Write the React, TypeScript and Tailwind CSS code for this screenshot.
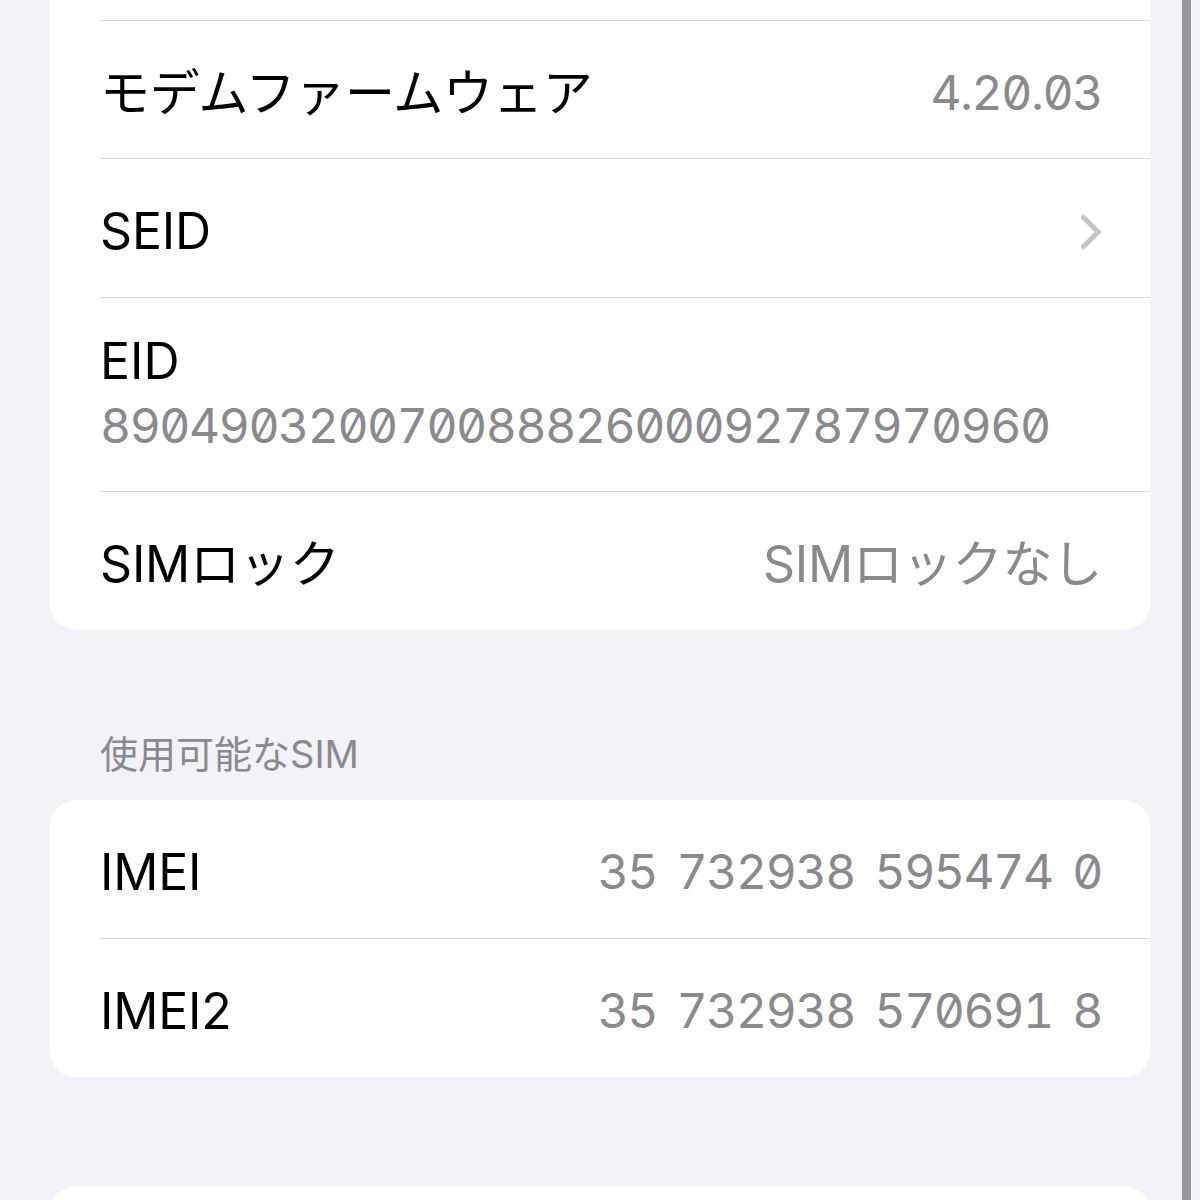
import React from "react";

// iOS "About" settings list, zoomed screenshot
const font = "font-['Inter','Noto_Sans_CJK_JP',sans-serif]";

function Separator() {
  return <div className="ml-[50px] h-px shrink-0 bg-[#d8d8dc]" />;
}

function Chevron() {
  return (
    <svg width="22" height="36" viewBox="0 0 22 36" fill="none" className="mt-[2px]">
      <path
        d="M3.5 3.5 L18.5 18 L3.5 32.5"
        stroke="#c4c4c7"
        strokeWidth="5"
        strokeLinecap="round"
        strokeLinejoin="round"
      />
    </svg>
  );
}

interface RowProps {
  label: string;
  value?: string;
  numeric?: boolean;
  chevron?: boolean;
  height: string;
}

function Row({ label, value, numeric, chevron, height }: RowProps) {
  return (
    <div className={`flex shrink-0 items-center justify-between pl-[50px] pr-[48px] pt-[6px] ${height}`}>
      <span className="text-[50px] leading-[60px] text-black tracking-[-0.2px]">{label}</span>
      {value &&
        (numeric ? (
          <span className="text-[48px] leading-[60px] text-[#8a8a8e] tabular-nums slashed-zero tracking-[-1.4px] [word-spacing:8px]">
            {value}
          </span>
        ) : (
          <span className="text-[50px] leading-[60px] text-[#8a8a8e] tracking-[-0.2px]">{value}</span>
        ))}
      {chevron && <Chevron />}
    </div>
  );
}

export default function App() {
  return (
    <div className={`flex h-[1200px] w-[1200px] overflow-hidden bg-[#f2f2f7] ${font}`}>
      <div className="flex w-[1182px] shrink-0 flex-col pl-[50px] pr-[32px]">
        {/* Device info card (continues above the fold) */}
        <div className="flex shrink-0 flex-col overflow-hidden rounded-b-[26px] bg-white">
          <div className="h-[20px] shrink-0" />
          <Separator />
          <Row label="モデムファームウェア" value="4.20.03" numeric height="h-[137px]" />
          <Separator />
          <Row label="SEID" chevron height="h-[138px]" />
          <Separator />
          <div className="flex h-[193px] shrink-0 flex-col pl-[50px] pt-[33px]">
            <span className="text-[50px] leading-[60px] text-black">EID</span>
            <span className="mt-[5px] text-[48px] leading-[60px] text-[#8a8a8e] tabular-nums slashed-zero tracking-[-1.45px]">
              89049032007008882600092787970960
            </span>
          </div>
          <Separator />
          <Row label="SIMロック" value="SIMロックなし" height="h-[138px]" />
        </div>

        {/* Available SIM section */}
        <div className="shrink-0 pl-[50px] pt-[101px] pb-[23px]">
          <span className="block text-[38px] leading-[46px] text-[#8a8a8e]">使用可能なSIM</span>
        </div>
        <div className="flex shrink-0 flex-col overflow-hidden rounded-[26px] bg-white">
          <Row label="IMEI" value="35 732938 595474 0" numeric height="h-[138px]" />
          <Separator />
          <Row label="IMEI2" value="35 732938 570691 8" numeric height="h-[138px]" />
        </div>

        <div className="mt-[109px] h-[60px] shrink-0 rounded-t-[26px] bg-white" />
      </div>
      <div className="w-[9px] shrink-0 bg-[#98989c]" />
      <div className="flex-1 bg-[#f4f4f8]" />
    </div>
  );
}
